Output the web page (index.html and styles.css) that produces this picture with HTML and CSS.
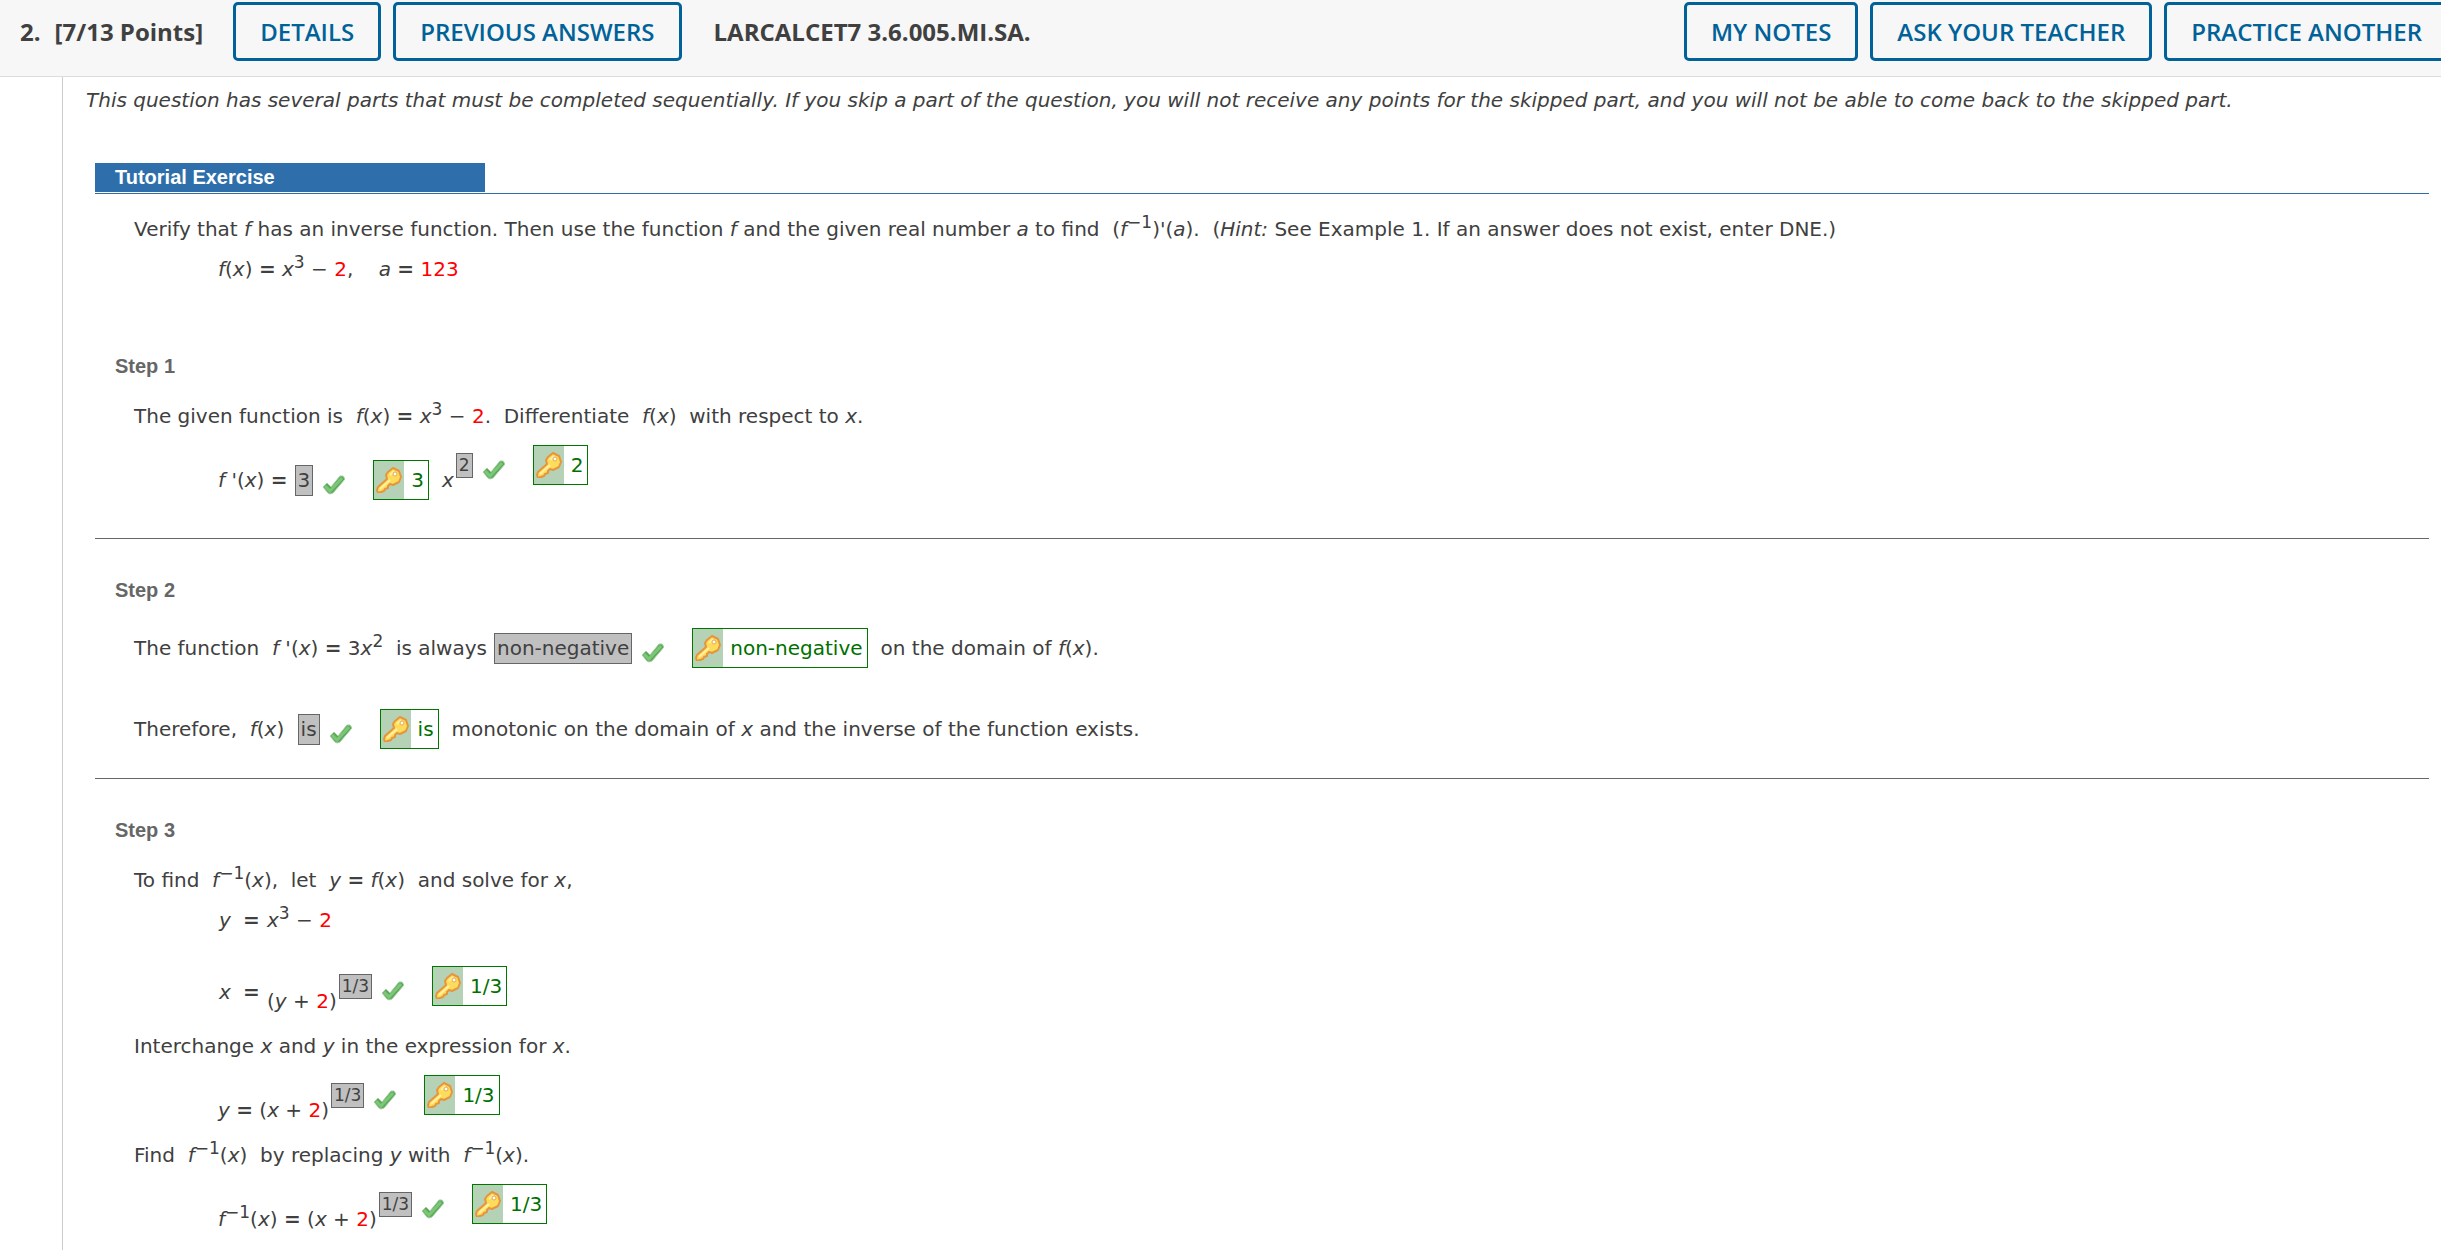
FILE: index.html
```
<!DOCTYPE html>
<html lang="en">
<head>
    <meta charset="UTF-8">
    <meta name="viewport" content="width=device-width, initial-scale=1.0">
    <title>LARCALCET7 3.6.005.MI.SA.</title>
    <link rel="stylesheet" href="styles.css">
</head>
<body>
    <!-- Shared icons -->
    <svg class="sprite" aria-hidden="true">
        <symbol id="check" viewBox="0 0 23 20">
            <path d="M1 12l4-4 4 4L18 1h3l2 3L11 18l-3 1-2-1z" fill="#5aa857" stroke="#a5cfa3" stroke-width="1"/>
            <path d="M3 11l5 5L20 3" fill="none" stroke="#7cc777" stroke-width="3"/>
        </symbol>
        <symbol id="key" viewBox="0 0 26 26">
            <path d="M12 5l5-4 6 3 2 6-2 5-6 3-3-1-2 2v2l-3 1-1 2-3 1-3 1-1-3 1-3 9-8-1-4z" fill="#fddc5c" stroke="#e5963c" stroke-width="2" stroke-linejoin="round"/>
            <path d="M4 22l10-9M14 8l4-4" fill="none" stroke="#fff0a0" stroke-width="2"/>
            <circle cx="19" cy="7" r="2" fill="#fff" stroke="#e5a850"/>
        </symbol>
    </svg>

    <!-- Question Header -->
    <header>
        <div class="header-left">
            <h1><span class="number">2.</span>[7/13 Points]</h1>
            <button class="btn">DETAILS</button>
            <button class="btn">PREVIOUS ANSWERS</button>
            <strong class="code">LARCALCET7 3.6.005.MI.SA.</strong>
        </div>
        <div class="header-right">
            <button class="btn">MY NOTES</button>
            <button class="btn">ASK YOUR TEACHER</button>
            <button class="btn">PRACTICE ANOTHER</button>
        </div>
    </header>

    <main>
        <p class="intro">This question has several parts that must be completed sequentially. If you skip a part of the question, you will not receive any points for the skipped part, and you will not be able to come back to the skipped part.</p>

        <!-- Tutorial Exercise -->
        <section class="tutorial">
            <div class="tutorial-title"><h2>Tutorial Exercise</h2></div>
            <p class="line">Verify that <i>f</i> has an inverse function. Then use the function <i>f</i> and the given real number <i>a</i> to find &nbsp;(<i>f</i><sup>−1</sup>)<i>'</i>(<i>a</i>). &nbsp;(<i>Hint:</i> See Example 1. If an answer does not exist, enter DNE.)</p>
            <p class="line indent"><i>f</i>(<i>x</i>) <b>=</b> <i>x</i><sup>3</sup> − <span class="red">2</span>, &nbsp;&nbsp; <i>a</i> <b>=</b> <span class="red">123</span></p>
        </section>

        <!-- Step 1 -->
        <section class="step first">
            <h3>Step 1</h3>
            <p class="line">The given function is &nbsp;<i>f</i>(<i>x</i>) <b>=</b> <i>x</i><sup>3</sup> − <span class="red">2</span>. &nbsp;Differentiate &nbsp;<i>f</i>(<i>x</i>) &nbsp;with respect to <i>x</i>.</p>
            <div class="row power indent">
                <span class="text"><i>f '</i>(<i>x</i>) <b>=</b></span>
                <span class="group">
                    <span class="answer">3</span>
                    <svg class="check"><use href="#check"/></svg>
                    <span class="correct"><svg class="key"><use href="#key"/></svg><span>3</span></span>
                </span>
                <span class="text base"><i>x</i></span>
                <span class="group raised">
                    <span class="answer small">2</span>
                    <svg class="check"><use href="#check"/></svg>
                    <span class="correct"><svg class="key"><use href="#key"/></svg><span>2</span></span>
                </span>
            </div>
        </section>

        <!-- Step 2 -->
        <section class="step">
            <h3>Step 2</h3>
            <div class="row">
                <span class="text">The function &nbsp;<i>f '</i>(<i>x</i>) <b>=</b> 3<i>x</i><sup>2</sup> &nbsp;is always</span>
                <span class="group">
                    <span class="answer">non-negative</span>
                    <svg class="check"><use href="#check"/></svg>
                    <span class="correct"><svg class="key"><use href="#key"/></svg><span>non-negative</span></span>
                </span>
                <span class="text after">on the domain of <i>f</i>(<i>x</i>).</span>
            </div>
            <div class="row spaced">
                <span class="text">Therefore, &nbsp;<i>f</i>(<i>x</i>)&nbsp;</span>
                <span class="group">
                    <span class="answer">is</span>
                    <svg class="check"><use href="#check"/></svg>
                    <span class="correct"><svg class="key"><use href="#key"/></svg><span>is</span></span>
                </span>
                <span class="text after">monotonic on the domain of <i>x</i> and the inverse of the function exists.</span>
            </div>
        </section>

        <!-- Step 3 -->
        <section class="step">
            <h3>Step 3</h3>
            <p class="line">To find &nbsp;<i>f</i><sup>−1</sup>(<i>x</i>), &nbsp;let &nbsp;<i>y</i> <b>=</b> <i>f</i>(<i>x</i>) &nbsp;and solve for <i>x</i>,</p>
            <div class="equations">
                <span><i>y</i></span><b>=</b><span><i>x</i><sup>3</sup> − <span class="red">2</span></span>
                <span class="middle"><i>x</i></span><b class="middle">=</b>
                <div class="row power">
                    <span class="text base">(<i>y</i> + <span class="red">2</span>)</span>
                    <span class="group raised">
                        <span class="answer small">1/3</span>
                        <svg class="check"><use href="#check"/></svg>
                        <span class="correct"><svg class="key"><use href="#key"/></svg><span>1/3</span></span>
                    </span>
                </div>
            </div>
            <p class="line">Interchange <i>x</i> and <i>y</i> in the expression for <i>x</i>.</p>
            <div class="row power indent">
                <span class="text base"><i>y</i> <b>=</b> (<i>x</i> + <span class="red">2</span>)</span>
                <span class="group raised">
                    <span class="answer small">1/3</span>
                    <svg class="check"><use href="#check"/></svg>
                    <span class="correct"><svg class="key"><use href="#key"/></svg><span>1/3</span></span>
                </span>
            </div>
            <p class="line">Find &nbsp;<i>f</i><sup>−1</sup>(<i>x</i>) &nbsp;by replacing <i>y</i> with &nbsp;<i>f</i><sup>−1</sup>(<i>x</i>).</p>
            <div class="row power indent">
                <span class="text base"><i>f</i><sup>−1</sup>(<i>x</i>) <b>=</b> (<i>x</i> + <span class="red">2</span>)</span>
                <span class="group raised">
                    <span class="answer small">1/3</span>
                    <svg class="check"><use href="#check"/></svg>
                    <span class="correct"><svg class="key"><use href="#key"/></svg><span>1/3</span></span>
                </span>
            </div>
        </section>
    </main>
</body>
</html>
```
FILE: styles.css
```
* {
    box-sizing: border-box;
}
body {
    margin: 0;
    background-color: #fff;
    color: #404040;
    font-family: Verdana, "DejaVu Sans", sans-serif;
    font-size: 20px;
    line-height: 40px;
}
.sprite {
    display: none;
}
p, h1, h2, h3 {
    margin: 0;
}
/* Header */
header {
    display: flex;
    justify-content: space-between;
    padding: 2px 0 15px 20px;
    background-color: #f7f7f7;
    border-bottom: 1px solid #ddd;
    font-family: "Open Sans", sans-serif;
    overflow: hidden;
}
.header-left, .header-right {
    display: flex;
    align-items: center;
    gap: 12px;
    white-space: nowrap;
}
.header-right {
    margin-right: -8px;
}
h1, .code {
    font-size: 24px;
    font-weight: 700;
}
h1 {
    margin-right: 18px;
}
.number {
    margin-right: 14px;
}
.code {
    margin-left: 20px;
}
.btn {
    height: 59px;
    padding: 0 24px;
    border: 3px solid #006298;
    border-radius: 5px;
    background: none;
    color: #006298;
    font-family: inherit;
    font-size: 24px;
    font-weight: 600;
    cursor: pointer;
}
/* Question body */
main {
    margin-left: 62px;
    padding: 3px 12px 8px 32px;
    border-left: 1px solid #ccc;
}
.intro {
    margin-left: -9px;
    font-style: italic;
}
.tutorial-title {
    margin: 43px 0 15px;
    padding-bottom: 1px;
    border-bottom: 1px solid #2e6fab;
}
h2 {
    width: 390px;
    padding-left: 20px;
    background-color: #2e6fab;
    color: #fff;
    font: bold 20px/29px Arial, "Liberation Sans", sans-serif;
}
.line, .row {
    padding-left: 39px;
}
.line {
    height: 40px;
}
.indent {
    padding-left: 123px;
}
sup {
    font-size: 17px;
    line-height: 0;
    vertical-align: 8px;
}
.red {
    color: #f00;
}
/* Steps */
.step {
    padding: 31px 0 29px;
    border-top: 1px solid #666;
}
.step.first {
    padding: 57px 0 33px;
    border-top: none;
}
h3 {
    margin-bottom: 10px;
    padding-left: 20px;
    color: #666;
    font: bold 20px/40px Arial, "Liberation Sans", sans-serif;
}
.row {
    display: flex;
    align-items: flex-end;
    margin-top: 18px;
    white-space: pre;
}
.row.spaced {
    margin-top: 41px;
}
.row.power {
    margin: 9px 0 5px;
}
.group {
    display: flex;
    align-items: center;
    margin-left: 7px;
}
.raised {
    margin-left: 2px;
    margin-bottom: 15px;
}
.after, .group + .base {
    margin-left: 13px;
}
.answer {
    height: 31px;
    padding: 0 2px;
    border: 1px solid #666;
    background-color: #c0c0c0;
    line-height: 29px;
}
.answer.small {
    height: 25px;
    font-size: 17px;
    line-height: 23px;
}
.check {
    width: 23px;
    height: 20px;
    margin: 10px 28px 0 9px;
}
.correct {
    display: flex;
    height: 40px;
    border: 1px solid #007800;
    background-color: #fff;
    color: #007000;
    line-height: 38px;
}
.correct span {
    padding: 0 4px 0 7px;
}
.key {
    width: 30px;
    height: 38px;
    padding: 6px 2px;
    background-color: #b5d1b6;
}
.equations {
    display: grid;
    grid-template-columns: 24px 24px auto;
    justify-content: start;
    padding-left: 124px;
    row-gap: 17px;
}
.equations .middle {
    padding-top: 15px;
}
.equations .row {
    padding-left: 0;
}
```
